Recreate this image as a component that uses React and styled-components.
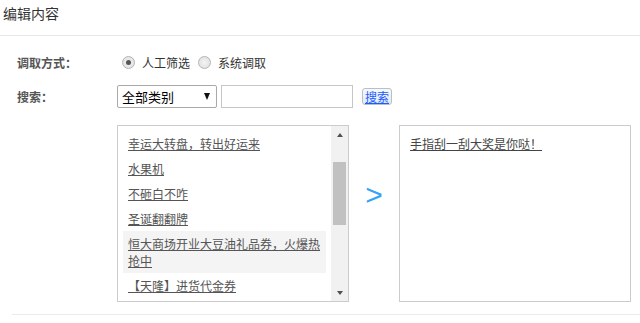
import React from 'react';
import styled, { createGlobalStyle } from 'styled-components';

const GlobalStyle = createGlobalStyle`
  body {
    margin: 0;
    background: #fff;
    font-family: "Noto Sans CJK SC", "Liberation Sans", sans-serif;
    font-size: 12px;
    color: #333;
  }
`;

const Header = styled.div`
  height: 35px;
  line-height: 26px;
  padding-left: 3px;
  font-size: 14px;
  color: #333;
  border-bottom: 1px solid #e8e8e8;
`;

const Section = styled.div`
  margin-left: 12px;
  padding: 14px 0 12px;
  border-bottom: 1px solid #ebebeb;
`;

const Row = styled.div`
  display: flex;
  align-items: ${(p) => (p.top ? 'flex-start' : 'center')};
  height: ${(p) => p.height || 'auto'};
  margin-bottom: ${(p) => p.gap || '0'};
`;

const Label = styled.div`
  width: 105px;
  flex-shrink: 0;
  padding-left: 5px;
  box-sizing: border-box;
  font-weight: bold;
  color: #555;
`;

const RadioGroup = styled.div`
  display: flex;
  align-items: center;
  padding-left: 5px;
`;

const RadioItem = styled.label`
  display: flex;
  align-items: center;
  margin-right: 8px;
  color: #333;
`;

const RadioDot = styled.span`
  width: 11px;
  height: 11px;
  border-radius: 50%;
  border: 1px solid #b5b5b5;
  background: radial-gradient(circle, #f4f4f4 0%, #dcdcdc 100%);
  margin-right: 7px;
  display: flex;
  align-items: center;
  justify-content: center;
  &::after {
    content: '';
    width: 5px;
    height: 5px;
    border-radius: 50%;
    background: ${(p) => (p.checked ? '#555' : 'transparent')};
  }
`;

const Select = styled.div`
  width: 100px;
  height: 23px;
  box-sizing: border-box;
  border: 1px solid #a9a9a9;
  border-radius: 2px;
  display: flex;
  align-items: center;
  justify-content: space-between;
  padding: 0 6px 0 4px;
  font-size: 13px;
  color: #000;
`;

const Caret = styled.span`
  width: 0;
  height: 0;
  border-left: 3.5px solid transparent;
  border-right: 3.5px solid transparent;
  border-top: 7px solid #111;
`;

const TextInput = styled.div`
  width: 132px;
  height: 23px;
  box-sizing: border-box;
  border: 1px solid #c6c6c6;
  margin-left: 4px;
`;

const SearchButton = styled.button`
  margin-left: 9px;
  height: 17px;
  padding: 0 2px;
  border: 1px solid #b4c0cc;
  border-radius: 3px;
  background: linear-gradient(#f6f9fc, #e3e9f0);
  font-family: inherit;
  font-size: 12px;
  line-height: 15px;
  color: #1a5cff;
  text-decoration: underline;
`;

const ListBox = styled.div`
  width: 232px;
  height: 177px;
  flex-shrink: 0;
  box-sizing: border-box;
  border: 1px solid #ccc;
  display: flex;
  overflow: hidden;
`;

const Items = styled.div`
  flex: 1;
  padding: ${(p) => p.pad || '5px'};
  overflow: hidden;
`;

const Item = styled.div`
  padding: 4px 5px;
  line-height: 17px;
  background: ${(p) => (p.active ? '#f4f4f4' : 'transparent')};
  color: ${(p) => p.color || '#555'};
  span {
    text-decoration: underline;
  }
`;

const Scrollbar = styled.div`
  width: 17px;
  background: #f1f1f1;
  display: flex;
  flex-direction: column;
`;

const ScrollButton = styled.div`
  height: 17px;
  display: flex;
  align-items: center;
  justify-content: center;
  &::after {
    content: '';
    border-left: 3.5px solid transparent;
    border-right: 3.5px solid transparent;
    ${(p) => (p.down ? 'border-top' : 'border-bottom')}: 4px solid #505050;
  }
`;

const Track = styled.div`
  flex: 1;
  padding: 19px 2px 0;
`;

const Thumb = styled.div`
  height: 63px;
  background: #c1c1c1;
`;

const Arrow = styled.div`
  width: 50px;
  flex-shrink: 0;
  text-align: center;
  padding-top: 55px;
  font-family: "Liberation Sans", sans-serif;
  font-size: 30px;
  line-height: 30px;
  color: #36a3f7;
`;

const sourceItems = [
  '幸运大转盘，转出好运来',
  '水果机',
  '不砸白不咋',
  '圣诞翻翻牌',
  '恒大商场开业大豆油礼品券，火爆热抢中',
  '【天隆】进货代金券',
];

export default function App() {
  return (
    <>
      <GlobalStyle />
      <Header>编辑内容</Header>
      <Section>
        <Row height="24px" gap="11px">
          <Label>调取方式：</Label>
          <RadioGroup>
            <RadioItem>
              <RadioDot checked />
              人工筛选
            </RadioItem>
            <RadioItem>
              <RadioDot />
              系统调取
            </RadioItem>
          </RadioGroup>
        </Row>
        <Row height="23px" gap="17px">
          <Label>搜索：</Label>
          <Select>
            全部类别
            <Caret />
          </Select>
          <TextInput />
          <SearchButton>搜索</SearchButton>
        </Row>
        <Row top>
          <Label />
          <ListBox>
            <Items>
              {sourceItems.map((t, i) => (
                <Item key={t} active={i === 4}>
                  <span>{t}</span>
                </Item>
              ))}
            </Items>
            <Scrollbar>
              <ScrollButton />
              <Track>
                <Thumb />
              </Track>
              <ScrollButton down />
            </Scrollbar>
          </ListBox>
          <Arrow>&gt;</Arrow>
          <ListBox>
            <Items pad="5px 5px">
              <Item color="#444">
                <span>手指刮一刮大奖是你哒！</span>
              </Item>
            </Items>
          </ListBox>
        </Row>
      </Section>
    </>
  );
}
